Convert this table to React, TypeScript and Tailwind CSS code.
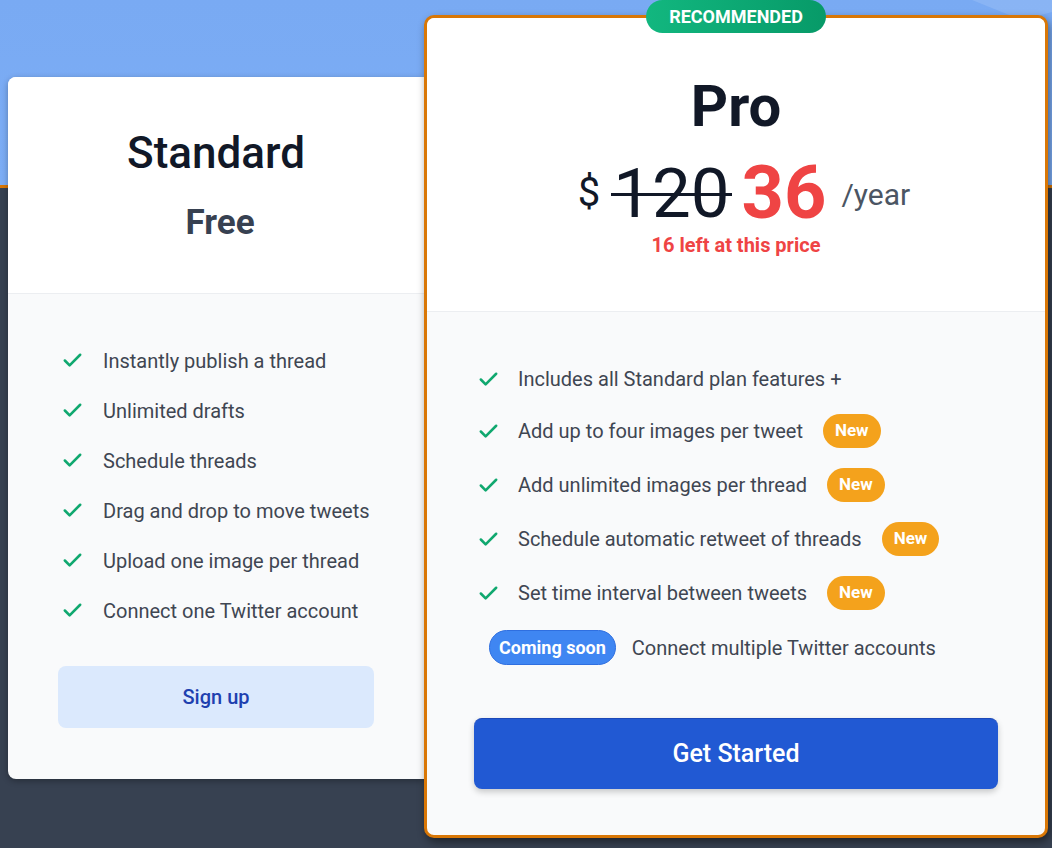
import { Check } from 'lucide-react'

const standardFeatures = [
  'Instantly publish a thread',
  'Unlimited drafts',
  'Schedule threads',
  'Drag and drop to move tweets',
  'Upload one image per thread',
  'Connect one Twitter account',
]

const proFeatures = [
  { text: 'Includes all Standard plan features +', isNew: false },
  { text: 'Add up to four images per tweet', isNew: true },
  { text: 'Add unlimited images per thread', isNew: true },
  { text: 'Schedule automatic retweet of threads', isNew: true },
  { text: 'Set time interval between tweets', isNew: true },
]

function CheckIcon() {
  return <Check className="h-[23px] w-[23px] shrink-0 text-[#10a86f]" strokeWidth={2.7} />
}

function NewBadge() {
  return (
    <span className="inline-flex h-[34px] items-center rounded-full bg-[#f4a21c] px-[12px] text-[17px] font-bold text-white">
      New
    </span>
  )
}

export default function App() {
  return (
    <div
      className="relative h-[848px] w-[1052px] overflow-hidden bg-[linear-gradient(to_bottom,#79aaf3_0px,#7cadf5_185px,#d97706_185px,#d97706_188px,#374151_188px)]"
      style={{ fontFamily: 'Roboto, "Liberation Sans", sans-serif' }}
    >
      <svg className="absolute right-0 top-0" width="120" height="24" viewBox="0 0 120 24">
        <path d="M40 0 L120 0 L120 12 L90 20 Z" fill="#ffffff" fillOpacity="0.12" />
      </svg>

      <div className="flex items-start pl-[8px]">
        {/* Standard plan */}
        <div className="mt-[77px] flex w-[416px] flex-col overflow-hidden rounded-l-lg bg-[#f9fafb] shadow-[0_2px_6px_rgba(0,0,0,0.3)]">
          <div className="flex flex-col items-center border-b border-[#eceef1] bg-white pb-[49px] pt-[50px]">
            <h2 className="text-[44px] font-medium leading-[1.2] text-[#111827]">Standard</h2>
            <p className="mt-[22px] pl-[8px] text-[35px] font-bold leading-[1.2] text-[#374151]">Free</p>
          </div>
          <div className="flex flex-col px-[50px] pb-[51px] pt-[52px]">
            <ul className="flex flex-col gap-5 pl-[3px]">
              {standardFeatures.map((f) => (
                <li key={f} className="flex h-[30px] items-center gap-[19px] text-[20px] text-[#3f4652]">
                  <CheckIcon />
                  <span>{f}</span>
                </li>
              ))}
            </ul>
            <button className="mt-[40px] h-[62px] w-full rounded-lg bg-[#dbe9fd] text-[20px] font-medium text-[#1e40af]">
              Sign up
            </button>
          </div>
        </div>

        {/* Pro plan */}
        <div className="relative z-10 mt-[15px] w-[624px] rounded-[10px] border-[3px] border-[#d97706] bg-[#f9fafb] shadow-[2px_4px_8px_rgba(0,0,0,0.45)]">
          <span className="absolute left-1/2 top-[-18px] flex h-[33px] w-[180px] -translate-x-1/2 items-center justify-center rounded-full bg-[linear-gradient(to_right,#12b77f,#079a68)] text-[18px] font-bold text-white">
            RECOMMENDED
          </span>
          <div className="flex flex-col items-center rounded-t-[8px] border-b border-[#eceef1] bg-white pb-[52px] pt-[59px]">
            <h2 className="text-[58px] font-bold leading-none text-[#111827]">Pro</h2>
            <div className="mt-[22px] flex h-[72px] items-center pl-[16px]">
              <span className="text-[40px] leading-none text-[#111827]">$</span>
              <span className="relative ml-[13px] text-[69px] leading-none text-[#111827]">
                120
                <span className="absolute left-[-2px] right-[-2px] top-[34px] h-[3px] bg-[#111827]" />
              </span>
              <span className="ml-[12px] text-[74px] font-bold leading-none text-[#ef4444]">36</span>
              <span className="ml-[15px] mt-[4px] text-[30px] leading-none text-[#4b5563]">/year</span>
            </div>
            <p className="mt-[2px] text-[20px] font-bold leading-[28px] text-[#ef4444]">16 left at this price</p>
          </div>
          <div className="flex flex-col px-[47px] pb-[46px] pt-[52px]">
            <ul className="flex flex-col gap-5 pl-[3px]">
              {proFeatures.map((f) => (
                <li key={f.text} className="flex min-h-[30px] items-center text-[20px] text-[#3f4652]">
                  <CheckIcon />
                  <span className="ml-[18px]">{f.text}</span>
                  {f.isNew && (
                    <span className="ml-[20px]">
                      <NewBadge />
                    </span>
                  )}
                </li>
              ))}
              <li className="flex items-center pl-[12px] text-[20px] text-[#3f4652]">
                <span className="inline-flex h-[35px] items-center rounded-full border border-[#2f6fe0] bg-[#3f86f2] px-[9px] text-[18px] font-bold text-white">
                  Coming soon
                </span>
                <span className="ml-[16px]">Connect multiple Twitter accounts</span>
              </li>
            </ul>
            <button className="mt-[53px] h-[71px] w-full rounded-lg border-t border-[#1c48b8] bg-[#2159d3] text-[25px] font-medium text-white shadow-[0_3px_6px_rgba(0,0,0,0.2)]">
              Get Started
            </button>
          </div>
        </div>
      </div>
    </div>
  )
}
